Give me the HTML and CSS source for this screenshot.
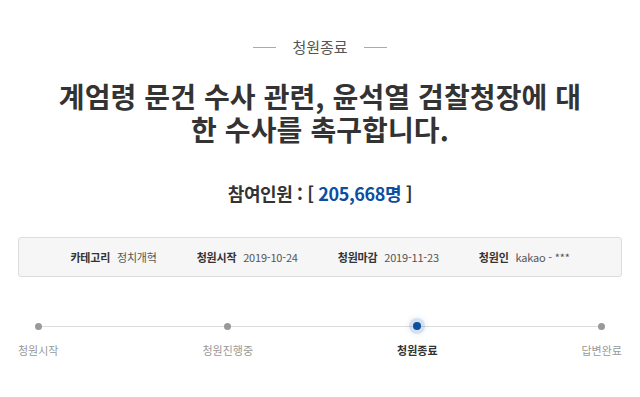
FILE: index.html
```html
<!DOCTYPE html>
<html lang="ko">
<head>
    <meta charset="UTF-8">
    <meta name="viewport" content="width=device-width, initial-scale=1.0">
    <title>청원종료</title>
    <link rel="stylesheet" href="styles.css">
</head>
<body>
    <div class="petition">
        <!-- status heading -->
        <div class="status">
            <span class="status-line"></span>
            <span class="status-text">청원종료</span>
            <span class="status-line"></span>
        </div>

        <h1 class="title">계엄령 문건 수사 관련, 윤석열 검찰청장에 대한 수사를 촉구합니다.</h1>

        <p class="count">참여인원 : [ <span class="count-num">205,668명</span> ]</p>

        <ul class="info">
            <li><strong>카테고리</strong> 정치개혁</li>
            <li><strong>청원시작</strong> 2019-10-24</li>
            <li><strong>청원마감</strong> 2019-11-23</li>
            <li><strong>청원인</strong> kakao - ***</li>
        </ul>

        <!-- progress steps -->
        <ol class="steps">
            <li class="step">청원시작</li>
            <li class="step">청원진행중</li>
            <li class="step active">청원종료</li>
            <li class="step">답변완료</li>
        </ol>
    </div>
</body>
</html>
```

FILE: styles.css
```css
    body {
        font-family: "Noto Sans CJK KR", "Noto Sans", sans-serif;
        margin: 0;
        padding: 0;
        background-color: #fff;
        color: #333;
    }

    .petition {
        padding: 0 18px;
    }

    .status {
        display: flex;
        justify-content: center;
        align-items: center;
        gap: 16px;
        padding-top: 36px;
        height: 22px;
    }

    .status-line {
        display: block;
        width: 23px;
        height: 1px;
        background-color: #aaa;
    }

    .status-text {
        font-size: 15px;
        color: #555;
        line-height: 22px;
    }

    .title {
        margin: 22px auto 0;
        max-width: 540px;
        font-size: 28px;
        line-height: 33px;
        font-weight: 700;
        text-align: center;
        color: #333;
        letter-spacing: 0.1px;
    }

    .count {
        margin: 34px 0 0;
        font-size: 18px;
        line-height: 26px;
        font-weight: 700;
        text-align: center;
        color: #333;
        letter-spacing: -0.4px;
    }

    .count-num {
        color: #0b4ea2;
    }

    .info {
        list-style: none;
        margin: 31px 0 0;
        padding: 0;
        height: 38px;
        display: flex;
        justify-content: center;
        align-items: center;
        gap: 40px;
        background-color: #f6f6f6;
        border: 1px solid #ddd;
        border-radius: 3px;
        font-size: 11px;
        color: #555;
        letter-spacing: -0.2px;
    }

    .info strong {
        color: #333;
        margin-right: 4px;
    }

    .steps {
        list-style: none;
        margin: 42px 0 0;
        padding: 0;
        display: flex;
        justify-content: space-between;
        position: relative;
    }

    .steps::before {
        content: "";
        position: absolute;
        left: 20px;
        right: 20px;
        top: 7px;
        height: 1px;
        background-color: #ddd;
    }

    .step {
        position: relative;
        display: flex;
        flex-direction: column;
        align-items: center;
        font-size: 11px;
        color: #999;
        line-height: 18px;
    }

    .step::before {
        content: "";
        display: block;
        width: 7px;
        height: 7px;
        margin: 4px 0 11px;
        border-radius: 50%;
        background-color: #999;
    }

    .step.active {
        color: #333;
        font-weight: 700;
    }

    .step.active::before {
        background-color: #0b4ea2;
        width: 8px;
        height: 8px;
        margin: 3px 0 11px;
        box-shadow: 0 0 0 4px rgba(11, 78, 162, 0.12), 0 0 4px 6px rgba(11, 78, 162, 0.06);
    }
```
